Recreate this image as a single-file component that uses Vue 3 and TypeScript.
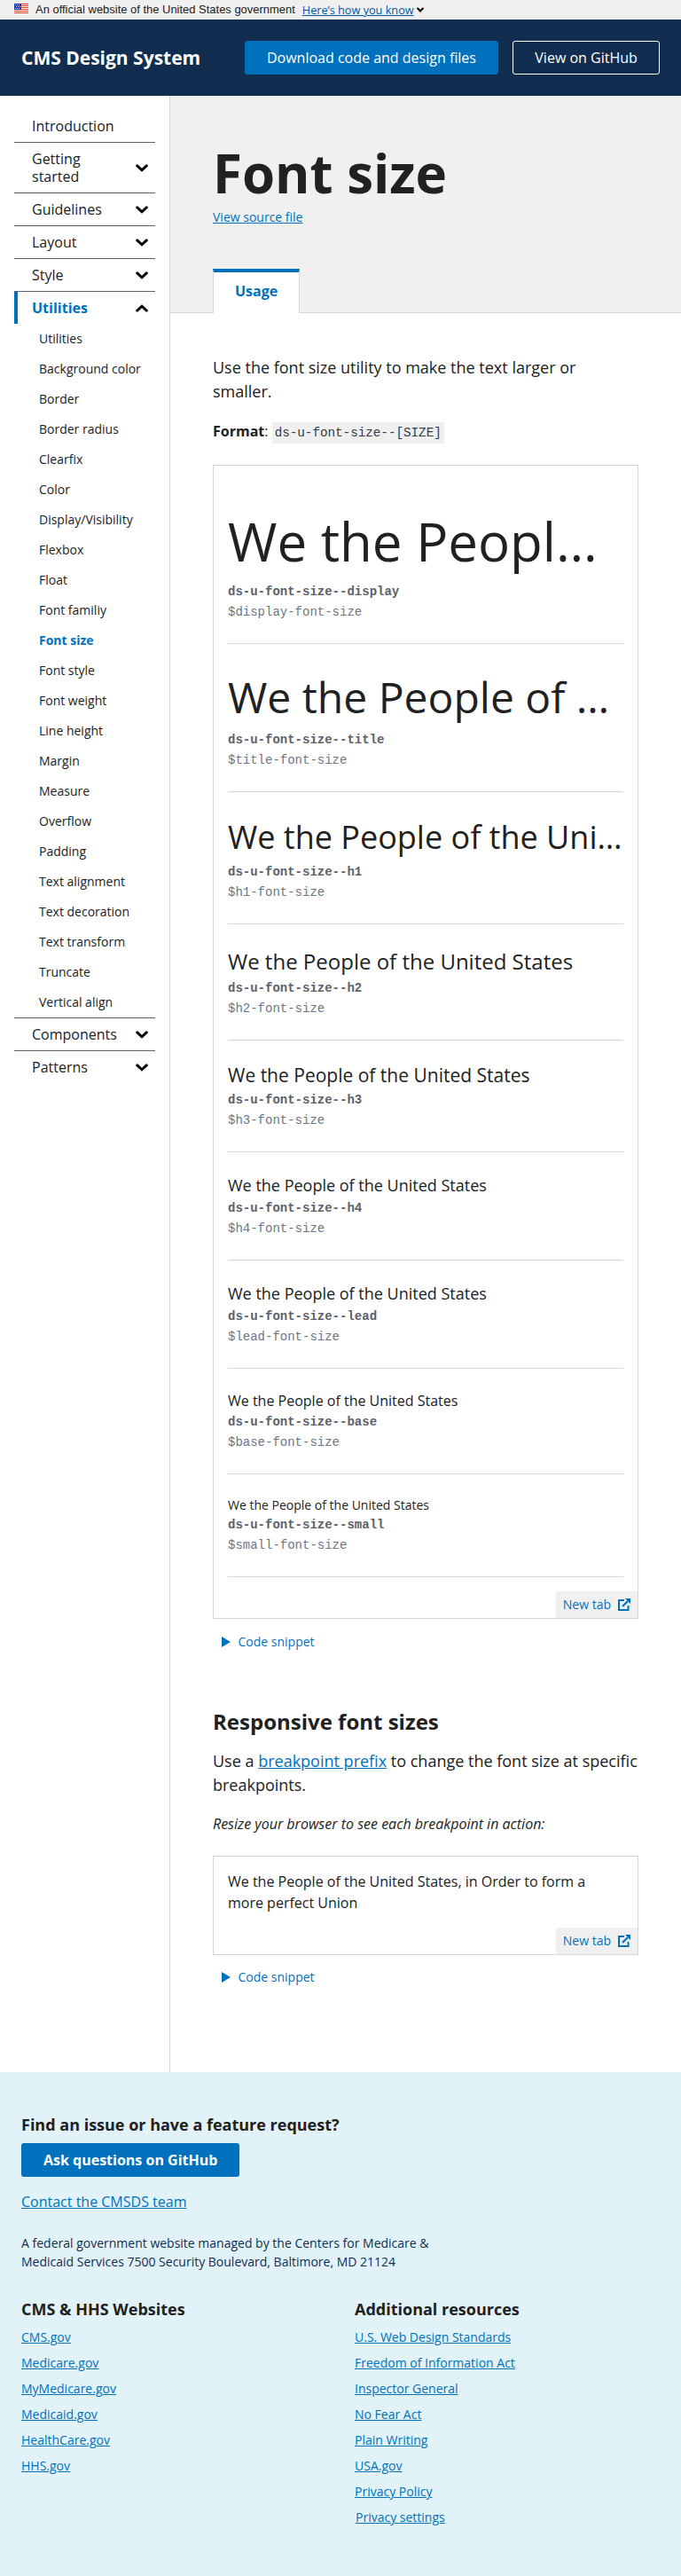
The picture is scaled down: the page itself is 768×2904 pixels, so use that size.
<script setup lang="ts">
interface Sample {
  name: string
  size: number
}

interface Section {
  label: string
  chevron?: boolean
  open?: boolean
  children?: string[]
}

const subItems: string[] = [
  'Utilities', 'Background color', 'Border', 'Border radius', 'Clearfix', 'Color',
  'Display/Visibility', 'Flexbox', 'Float', 'Font familiy', 'Font size', 'Font style',
  'Font weight', 'Line height', 'Margin', 'Measure', 'Overflow', 'Padding',
  'Text alignment', 'Text decoration', 'Text transform', 'Truncate', 'Vertical align',
]
const sections: Section[] = [
  { label: 'Introduction' },
  { label: 'Getting started', chevron: true },
  { label: 'Guidelines', chevron: true },
  { label: 'Layout', chevron: true },
  { label: 'Style', chevron: true },
  { label: 'Utilities', chevron: true, open: true, children: subItems },
  { label: 'Components', chevron: true },
  { label: 'Patterns', chevron: true },
]
const samples: Sample[] = [
  { name: 'display', size: 60 },
  { name: 'title', size: 48 },
  { name: 'h1', size: 36 },
  { name: 'h2', size: 24 },
  { name: 'h3', size: 21 },
  { name: 'h4', size: 18 },
  { name: 'lead', size: 18 },
  { name: 'base', size: 16 },
  { name: 'small', size: 14 },
]
const cmsSites = ['CMS.gov', 'Medicare.gov', 'MyMedicare.gov', 'Medicaid.gov', 'HealthCare.gov', 'HHS.gov']
const resources = [
  'U.S. Web Design Standards', 'Freedom of Information Act', 'Inspector General', 'No Fear Act',
  'Plain Writing', 'USA.gov', 'Privacy Policy',
]
</script>

<template>
  <div class="page">
    <div class="banner">
      <svg class="flag" width="16" height="11" viewBox="0 0 16 11" shape-rendering="crispEdges">
        <rect width="16" height="11" fill="#fff" />
        <path d="M0 0h16v1H0zM0 2h16v1H0zM0 4h16v1H0zM0 6h16v1H0zM0 8h16v1H0zM0 10h16v1H0z" fill="#db3e1f" />
        <rect width="8" height="7" fill="#1e33b1" />
        <path d="M1 1h1v1H1zM3 1h1v1H3zM5 1h1v1H5zM2 3h1v1H2zM4 3h1v1H4zM6 3h1v1H6zM1 5h1v1H1zM3 5h1v1H3zM5 5h1v1H5z" fill="#fff" />
      </svg>
      <span class="banner-text">An official website of the United States government</span>
      <a class="banner-link">Here’s how you know</a>
      <svg class="banner-chevron" width="8" height="6" viewBox="0 0 14 9"><path d="M2 2l5 5 5-5" fill="none" stroke="#000" stroke-width="3.6" stroke-linecap="round" /></svg>
    </div>

    <header class="header">
      <div class="brand">CMS Design System</div>
      <a class="btn btn-primary">Download code and design files</a>
      <a class="btn btn-outline">View on GitHub</a>
    </header>

    <div class="body">
      <nav class="nav">
        <div v-for="s in sections" :key="s.label" class="nav-section">
          <div class="nav-item" :class="{ active: s.open }">
            <span class="nav-label">{{ s.label }}</span>
            <svg v-if="s.chevron" class="chevron" :class="{ up: s.open }" width="14" height="9" viewBox="0 0 14 9">
              <path d="M1.7 1.9L7 6.8l5.300-4.900" fill="none" stroke="#000" stroke-width="3" stroke-linecap="round" />
            </svg>
          </div>
          <div v-for="c in s.children" :key="c" class="sub-item" :class="{ current: c === 'Font size' }">{{ c }}</div>
        </div>
      </nav>

      <main class="main">
        <div class="hero">
          <h1>Font size</h1>
          <a class="source">View source file</a>
          <div class="tabs"><div class="tab">Usage</div></div>
        </div>

        <div class="content">
          <p class="lead">Use the font size utility to make the text larger or smaller.</p>
          <p class="format"><b>Format</b>: <code>ds-u-font-size--[SIZE]</code></p>

          <div class="example">
            <div class="example-body">
              <div v-for="s in samples" :key="s.name" class="sample">
                <div class="sample-text" :style="{ fontSize: s.size + 'px' }">We the People of the United States</div>
                <div class="sample-class">ds-u-font-size--{{ s.name }}</div>
                <div class="sample-var">${{ s.name }}-font-size</div>
              </div>
            </div>
            <a class="new-tab">New tab
              <svg width="14" height="14" viewBox="0 0 14 14"><path d="M7 2H1v11h10.500V8" fill="none" stroke="#0071bc" stroke-width="2" /><path d="M5 9l6-6" stroke="#0071bc" stroke-width="2.200" /><path d="M8 0h6v6z" fill="#0071bc" /></svg>
            </a>
          </div>
          <div class="snippet"><svg width="10" height="12" viewBox="0 0 10 12"><path d="M0 0l10 6-10 6z" fill="#0071bc" /></svg>Code snippet</div>

          <h2>Responsive font sizes</h2>
          <p class="lead">Use a <a>breakpoint prefix</a> to change the font size at specific breakpoints.</p>
          <p class="hint">Resize your browser to see each breakpoint in action:</p>

          <div class="example">
            <div class="example-body">We the People of the United States, in Order to form a more perfect Union</div>
            <a class="new-tab">New tab
              <svg width="14" height="14" viewBox="0 0 14 14"><path d="M7 2H1v11h10.500V8" fill="none" stroke="#0071bc" stroke-width="2" /><path d="M5 9l6-6" stroke="#0071bc" stroke-width="2.200" /><path d="M8 0h6v6z" fill="#0071bc" /></svg>
            </a>
          </div>
          <div class="snippet"><svg width="10" height="12" viewBox="0 0 10 12"><path d="M0 0l10 6-10 6z" fill="#0071bc" /></svg>Code snippet</div>
        </div>
      </main>
    </div>

    <footer class="footer">
      <h3>Find an issue or have a feature request?</h3>
      <a class="ask">Ask questions on GitHub</a>
      <div class="contact"><a>Contact the CMSDS team</a></div>
      <p class="address">A federal government website managed by the Centers for Medicare &amp; Medicaid Services 7500 Security Boulevard, Baltimore, MD 21124</p>
      <div class="columns">
        <div>
          <h3>CMS &amp; HHS Websites</h3>
          <div v-for="l in cmsSites" :key="l" class="foot-link"><a>{{ l }}</a></div>
        </div>
        <div>
          <h3>Additional resources</h3>
          <div v-for="l in resources" :key="l" class="foot-link"><a>{{ l }}</a></div>
          <div class="foot-link settings"><a>Privacy settings</a></div>
        </div>
      </div>
    </footer>
  </div>
</template>

<style>
body { margin: 0; background: #fff; }
</style>

<style scoped>
* { box-sizing: border-box; }
.page { width: 768px; height: 2904px; display: flex; flex-direction: column; font: 16px/24px "Open Sans", sans-serif; color: #212121; overflow: hidden; }
h1, h2, h3, p { margin: 0; }
a { color: #0071bc; text-decoration: underline; }

.banner { height: 22px; flex: none; background: #f0f0f0; display: flex; align-items: center; padding-left: 16px; font: 12.96px/22px "Liberation Sans", sans-serif; white-space: nowrap; }
.flag { margin: -3px 8px 0 0; }
.banner-text { margin-right: 8px; }
.banner-link { font-family: "Open Sans", sans-serif; font-size: 12.7px; color: #0059a3; }
.banner-chevron { margin-left: 3px; }

.header { height: 86px; flex: none; background: #112e51; color: #fff; display: flex; align-items: center; padding: 0 24px; gap: 16px; }
.brand { font-size: 21px; font-weight: 700; flex: 1; white-space: nowrap; }
.btn { height: 38px; padding: 0 24.2px; border: 1px solid #0071bc; border-radius: 3px; line-height: 36px; color: #fff; text-decoration: none; white-space: nowrap; }
.btn-primary { background: #0071bc; }
.btn-outline { border-color: #fff; }

.body { height: 2228px; flex: none; display: flex; }
.nav { width: 192px; flex: none; border-right: 1px solid #d6d7d9; padding: 16px 16px 0; }
.nav-section + .nav-section { border-top: 1px solid #5b616b; }
.nav-item { display: flex; align-items: center; justify-content: space-between; padding: 8px 8px 8px 20px; line-height: 20px; }
.nav-item.active { border-left: 4px solid #0071bc; padding-left: 16px; color: #0071bc; font-weight: 700; }
.nav-label { max-width: 100px; }
.chevron { flex: none; }
.chevron.up { transform: rotate(180deg); }
.sub-item { height: 34px; padding-left: 28px; font-size: 14px; line-height: 34px; white-space: nowrap; }
.sub-item.current { color: #0071bc; font-weight: 700; }

.main { flex: 1; min-width: 0; }
.hero { height: 245px; background: #f0f0f0; border-bottom: 1px solid #d6d7d9; padding: 48px 48px 0; display: flex; flex-direction: column; align-items: flex-start; }
h1 { font-size: 60px; line-height: 78px; }
.source { font-size: 14px; line-height: 21px; }
.tabs { margin-top: auto; margin-bottom: -1px; }
.tab { height: 50px; padding: 0 24px; background: #fff; border: 1px solid #d6d7d9; border-top: 4px solid #0071bc; border-bottom: 0; color: #0071bc; font-weight: 700; line-height: 42px; }

.content { padding: 48px; }
.lead { font-size: 18px; line-height: 27px; }
.format { margin: 19px 0 25.6px; }
code { font: 14.25px "Liberation Mono", monospace; background: #f0f0f0; color: #323a45; padding: 4px 3px; }
.example { border: 1px solid #d6d7d9; display: flex; flex-direction: column; }
.example-body { padding: 16px; }
.sample { padding: 24px 0; border-bottom: 1px solid #d6d7d9; }
.sample-text { line-height: 1.5; white-space: nowrap; overflow: hidden; text-overflow: ellipsis; }
.sample-class, .sample-var { font-family: "Courier New", "Liberation Mono", monospace; font-size: 14px; line-height: 24px; color: #5b616b; }
.sample-class { font-weight: 700; }
.sample-var { line-height: 22px; color: #6f757f; }
.new-tab { align-self: flex-end; display: flex; align-items: center; gap: 8px; height: 30px; padding: 0 8px; background: #f0f0f0; font-size: 14px; text-decoration: none; }
.snippet { display: flex; align-items: center; gap: 8.5px; margin-top: 15px; padding-left: 10px; height: 21px; font-size: 14px; color: #0071bc; }
h2 { font-size: 24px; line-height: 31px; margin: 63.900px 0 16px; }
.hint { margin: 18px 0 24px; font-style: italic; }

.footer { flex: 1; background: #e1f3f8; padding: 47px 24px; }
h3 { font-size: 18px; line-height: 24px; margin-bottom: 9px; }
.ask { display: block; width: fit-content; height: 38px; padding: 0 25px; border-radius: 3px; background: #0071bc; color: #fff; font-weight: 700; line-height: 38px; text-decoration: none; }
.contact { margin-top: 16px; }
.address { width: 480px; margin-top: 24px; font-size: 14px; line-height: 21px; color: #112e51; }
.columns { display: grid; grid-template-columns: 376px 1fr; margin-top: 31px; }
.foot-link { height: 29px; font-size: 14px; line-height: 21px; }
.settings { padding-left: 1px; }
</style>
